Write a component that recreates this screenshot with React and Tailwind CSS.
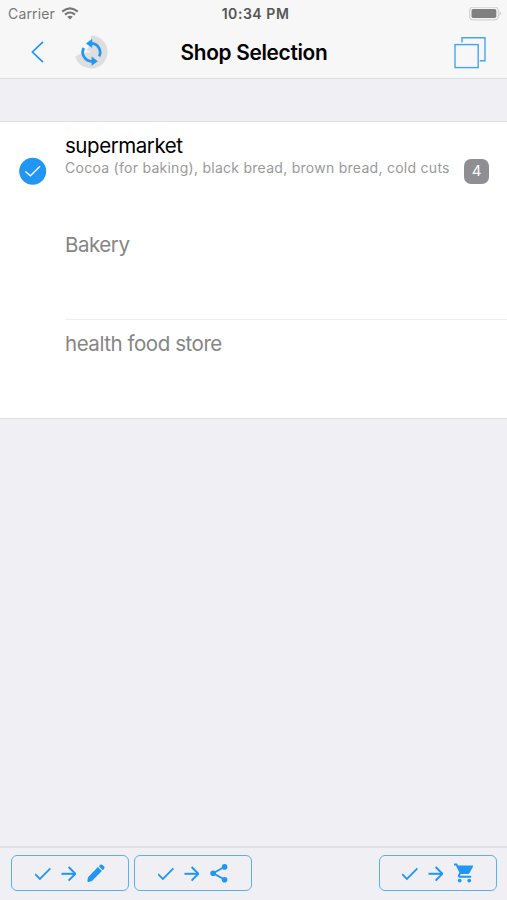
import React from 'react';

const shops = [
  { name: 'supermarket', items: 'Cocoa (for baking), black bread, brown bread, cold cuts', count: 4 },
  { name: 'Bakery' },
  { name: 'health food store' },
];

function WifiIcon() {
  return (
    <svg className="h-[13px] w-[18px]" viewBox="0 0 18 13" fill="none" stroke="#777777" strokeWidth="2.1">
      <path d="M1.2 4.6 Q9 -1.9 16.8 4.6" />
      <path d="M4 7.6 Q9 3.4 14 7.6" />
      <path d="M9 12.6 L6.2 9.7 Q9 7.6 11.8 9.7 Z" fill="#777777" stroke="none" />
    </svg>
  );
}

function BatteryIcon() {
  return (
    <svg className="h-[14px] w-[34px]" viewBox="0 0 34 14">
      <rect x="0.6" y="0.1" width="28.8" height="12.8" rx="3.6" fill="#f4f4f4" stroke="#d4d4d4" strokeWidth="1.2" />
      <rect x="2.5" y="2.1" width="24.8" height="8.8" rx="1.6" fill="#808080" />
      <path d="M30.6 4.3 Q33.4 6.5 30.6 8.7 Z" fill="#c8c8c8" />
    </svg>
  );
}

function BackIcon() {
  return (
    <svg className="h-[22px] w-[13px]" viewBox="0 0 13 22" fill="none" stroke="#2196f3" strokeWidth="1.7">
      <path d="M12 0.8 L1.4 11 L12 21.2" />
    </svg>
  );
}

function SyncIcon() {
  return (
    <svg className="h-9 w-9" viewBox="0 0 36 36">
      <path d="M17.5 18 L12.5 16.5 L17.5 8 L16.5 1.6 A16.5 16.5 0 1 1 1.2 22.5 L7 19.5 Z" fill="#dedede" />
      <g fill="none" stroke="#2196f3" strokeWidth="2.7">
        <path d="M17.2 9.4 A9 9 0 0 1 25.2 22.4" />
        <path d="M18.8 27.2 A9 9 0 0 1 9.8 14" />
      </g>
      <path d="M12 9.4 L18.2 4.8 V14 Z" fill="#2196f3" />
      <path d="M23.8 27.2 L17.6 22.6 V31.8 Z" fill="#2196f3" />
    </svg>
  );
}

function CopyIcon() {
  return (
    <svg className="h-8 w-8" viewBox="0 0 32 32" fill="none" stroke="#42a5f5" strokeWidth="1.4">
      <rect x="1" y="7.6" width="23.2" height="23" />
      <path d="M8 5.6 V0.8 H31 V23.8 H25.8" />
    </svg>
  );
}

function CheckIcon() {
  return (
    <svg className="h-[18px] w-4" viewBox="0 0 16 18" fill="none" stroke="#2196f3" strokeWidth="1.8">
      <path d="M0.1 10.2 L4.9 15 L15.4 4.4" />
    </svg>
  );
}

function ArrowIcon() {
  return (
    <svg className="h-[18px] w-[15px]" viewBox="0 0 15 18" fill="none" stroke="#2196f3" strokeWidth="2">
      <path d="M0.5 9.8 H14.5" />
      <path d="M7.6 3 L14.4 9.8 L7.6 16.6" />
    </svg>
  );
}

function PencilIcon() {
  return (
    <svg className="h-[18px] w-[18px]" viewBox="0 0 18 18" fill="#2196f3">
      <path d="M10.9 3.1 L14.9 7.1 L5.2 16.8 Q4.4 17.4 3.4 17.5 L1.1 17.9 Q0.4 17.9 0.4 17.2 L0.7 14.8 Q0.8 13.7 1.5 12.8 Z" />
      <path d="M11.8 2.2 L13.3 0.8 Q14.4 0 15.5 0.9 L17.1 2.5 Q18 3.5 17.2 4.6 L15.8 6.2 Z" />
    </svg>
  );
}

function ShareIcon() {
  return (
    <svg className="h-5 w-[18px]" viewBox="0 0 18 20" fill="#2196f3">
      <path d="M14.6 3.8 L3.2 10.2 L14.6 16.6" fill="none" stroke="#2196f3" strokeWidth="1.8" />
      <circle cx="14.6" cy="3.9" r="2.8" />
      <circle cx="3.1" cy="10.2" r="2.8" />
      <circle cx="14.6" cy="16.7" r="2.8" />
    </svg>
  );
}

function CartIcon() {
  return (
    <svg className="h-5 w-5" viewBox="1 2 21 20" fill="#2196f3">
      <path d="M7 18c-1.1 0-1.99.9-1.99 2S5.9 22 7 22s2-.9 2-2-.9-2-2-2zM1 2v2h2l3.6 7.59-1.35 2.45c-.16.28-.25.61-.25.96 0 1.1.9 2 2 2h12v-2H7.42c-.14 0-.25-.11-.25-.25l.03-.12.9-1.63h7.45c.75 0 1.41-.41 1.75-1.03l3.58-6.49A1.003 1.003 0 0 0 20 4H5.21l-.94-2H1zm16 16c-1.1 0-1.99.9-1.99 2s.89 2 1.99 2 2-.9 2-2-.9-2-2-2z" />
    </svg>
  );
}

function ActionButton({ label, className = '', children }) {
  return (
    <button
      type="button"
      aria-label={label}
      className={`flex h-9 w-[118px] items-center justify-center gap-[10.5px] rounded-[6px] border-[1.5px] border-[#5aaff3] ${className}`}
    >
      <CheckIcon />
      <ArrowIcon />
      {children}
    </button>
  );
}

function ShopRow({ shop, divider }) {
  return (
    <li className="flex h-[99px] last:h-[98px]">
      <div className="w-[65px] shrink-0 pl-[19px] pt-[35px]">
        {shop.count && (
          <svg className="h-[28px] w-[28px]" viewBox="0 0 28 28" fill="none">
            <circle cx="13.7" cy="14.3" r="13.5" fill="#2196f3" />
            <path d="M6.4 14.4 L11.4 18.8 L21 9.2" stroke="white" strokeWidth="1.3" />
          </svg>
        )}
      </div>
      <div className={`flex grow border-b ${divider ? 'border-[#efeff0]' : 'border-transparent'}`}>
        <div className="grow whitespace-nowrap pt-[10px]">
          <p className={`text-[20.5px] leading-[27px] tracking-[-0.45px] ${shop.count ? 'text-black' : 'text-[#858585]'}`}>{shop.name}</p>
          {shop.items && (
            <p className="text-[14px] leading-[18px] tracking-[0.27px] text-[#999999]">{shop.items}</p>
          )}
        </div>
        {shop.count && (
          <span className="mr-[18px] mt-[37px] flex h-[25px] w-[25px] shrink-0 items-center justify-center rounded-[7px] bg-[#8e8e93] text-[15px] text-white">
            {shop.count}
          </span>
        )}
      </div>
    </li>
  );
}

function App() {
  return (
    <div className="flex h-[900px] w-[507px] flex-col overflow-hidden bg-[#efeff4] font-['Inter','Liberation_Sans',sans-serif]">
      <header className="h-[79px] border-b border-[#dfdfe1] bg-[#f7f7f7]">
        <div className="grid h-[27px] grid-cols-[1fr_auto_1fr] items-center pl-[8px] pr-[4px]">
          <div className="flex items-center gap-[6px] text-[14px] tracking-[0.15px] text-[#777777]">
            <span>Carrier</span>
            <WifiIcon />
          </div>
          <span className="text-[14px] font-semibold tracking-[0.55px] text-[#555555]">10:34 PM</span>
          <div className="flex justify-end">
            <BatteryIcon />
          </div>
        </div>
        <div className="grid h-[51px] grid-cols-[1fr_auto_1fr] items-center pl-[31px] pr-[21px]">
          <div className="-mt-px flex items-center gap-[30px]">
            <BackIcon />
            <SyncIcon />
          </div>
          <h1 className="mr-[9px] text-[20.8px] font-semibold tracking-[-0.3px] text-black">Shop Selection</h1>
          <div className="flex justify-end">
            <CopyIcon />
          </div>
        </div>
      </header>

      <main className="grow pt-[42px]">
        <ul className="border-y border-[#dfdfe2] bg-white">
          {shops.map((shop, i) => (
            <ShopRow key={shop.name} shop={shop} divider={i === 1} />
          ))}
        </ul>
      </main>

      <footer className="flex h-[54px] gap-[5px] border-t-2 border-[#e1e1e5] px-[10.5px] pt-[7px]">
        <ActionButton label="Edit">
          <PencilIcon />
        </ActionButton>
        <ActionButton label="Share">
          <ShareIcon />
        </ActionButton>
        <ActionButton label="Shop" className="ml-auto">
          <CartIcon />
        </ActionButton>
      </footer>
    </div>
  );
}

export default App;
